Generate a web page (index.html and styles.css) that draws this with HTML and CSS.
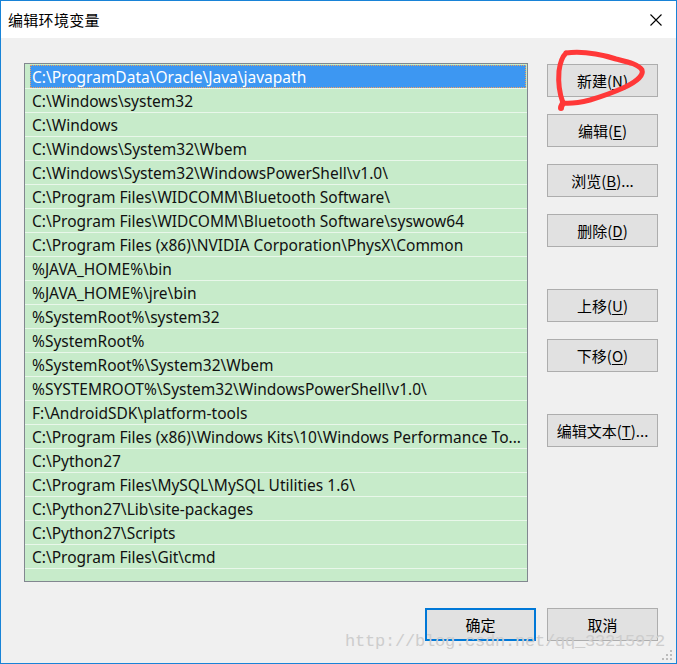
FILE: index.html
```html
<!DOCTYPE html>
<html>
<head>
<meta charset="utf-8">
<link rel="stylesheet" href="styles.css">
</head>
<body>
<div class="window">
  <div class="titlebar">
    <span class="title">编辑环境变量</span>
    <svg class="close" width="12" height="12" viewBox="0 0 12 12"><path d="M0.5 0.5 L11.5 11.5 M11.5 0.5 L0.5 11.5" stroke="#000" stroke-width="1.1" fill="none"/></svg>
  </div>
  <div class="content">
    <div class="main">
      <div class="list">
        <div class="row selected"><span>C:\ProgramData\Oracle\Java\javapath</span></div>
        <div class="row"><span>C:\Windows\system32</span></div>
        <div class="row"><span>C:\Windows</span></div>
        <div class="row"><span>C:\Windows\System32\Wbem</span></div>
        <div class="row"><span>C:\Windows\System32\WindowsPowerShell\v1.0\</span></div>
        <div class="row"><span>C:\Program Files\WIDCOMM\Bluetooth Software\</span></div>
        <div class="row"><span>C:\Program Files\WIDCOMM\Bluetooth Software\syswow64</span></div>
        <div class="row"><span>C:\Program Files (x86)\NVIDIA Corporation\PhysX\Common</span></div>
        <div class="row"><span>%JAVA_HOME%\bin</span></div>
        <div class="row"><span>%JAVA_HOME%\jre\bin</span></div>
        <div class="row"><span>%SystemRoot%\system32</span></div>
        <div class="row"><span>%SystemRoot%</span></div>
        <div class="row"><span>%SystemRoot%\System32\Wbem</span></div>
        <div class="row"><span>%SYSTEMROOT%\System32\WindowsPowerShell\v1.0\</span></div>
        <div class="row"><span>F:\AndroidSDK\platform-tools</span></div>
        <div class="row"><span>C:\Program Files (x86)\Windows Kits\10\Windows Performance To...</span></div>
        <div class="row"><span>C:\Python27</span></div>
        <div class="row"><span>C:\Program Files\MySQL\MySQL Utilities 1.6\</span></div>
        <div class="row"><span>C:\Python27\Lib\site-packages</span></div>
        <div class="row"><span>C:\Python27\Scripts</span></div>
        <div class="row"><span>C:\Program Files\Git\cmd</span></div>
      </div>
      <div class="side">
        <button class="btn">新建(<u>N</u>)</button>
        <button class="btn">编辑(<u>E</u>)</button>
        <button class="btn">浏览(<u>B</u>)...</button>
        <button class="btn">删除(<u>D</u>)</button>
        <button class="btn spaced">上移(<u>U</u>)</button>
        <button class="btn">下移(<u>O</u>)</button>
        <button class="btn spaced">编辑文本(<u>T</u>)...</button>
      </div>
    </div>
    <div class="footer">
      <button class="btn default">确定</button>
      <button class="btn">取消</button>
    </div>
  </div>
  <svg class="scribble" width="100" height="70" viewBox="0 0 100 70">
    <path d="M16 6 C 32 4, 50 7, 66 12 C 78 15, 88 17, 92 23 C 94 29, 84 36, 73 41 C 62 46, 50 50, 40 53 C 32 55, 22 57, 13 56 C 10 48, 8 36, 9 24 C 10 16, 13 9, 16 6" fill="none" stroke="#ff3838" stroke-width="5" stroke-linejoin="round" stroke-linecap="round"/>
    <path d="M13 56 C 12 58, 11 59, 11 61" fill="none" stroke="#ff3838" stroke-width="6" stroke-linecap="round"/>
  </svg>
  <div class="watermark">http://blog.csdn.net/qq_33215972</div>
  <svg class="grip" width="12" height="12" viewBox="0 0 12 12">
    <rect x="8" y="0" width="2" height="2" fill="#bcbcbc"/>
    <rect x="4" y="4" width="2" height="2" fill="#bcbcbc"/>
    <rect x="8" y="4" width="2" height="2" fill="#bcbcbc"/>
    <rect x="0" y="8" width="2" height="2" fill="#bcbcbc"/>
    <rect x="4" y="8" width="2" height="2" fill="#bcbcbc"/>
    <rect x="8" y="8" width="2" height="2" fill="#bcbcbc"/>
  </svg>
</div>
</body>
</html>
```
FILE: styles.css
```css
* { box-sizing: border-box; }
html, body { margin: 0; padding: 0; }
body {
  width: 677px;
  height: 664px;
  overflow: hidden;
  font-family: "Noto Sans", "Noto Sans CJK SC", sans-serif;
  font-size: 15px;
  color: #000;
}
.window {
  position: relative;
  width: 677px;
  height: 664px;
  border: 1px solid #1883d7;
  background: #f0f0f0;
  display: flex;
  flex-direction: column;
}
.titlebar {
  height: 37px;
  background: #fff;
  display: flex;
  align-items: center;
  justify-content: space-between;
  padding: 0 14px 1px 7px;
}
.title {
  font-family: "Noto Sans CJK SC", sans-serif;
  font-size: 15px;
  letter-spacing: 0.3px;
}
.close { display: block; margin-top: 1px; }
.content {
  padding: 25px 0 0 23px;
}
.main {
  display: flex;
  gap: 19px;
}
.list {
  width: 504px;
  height: 519px;
  border: 1px solid #828790;
  background: #c7ebca;
  padding-top: 1px;
}
.row {
  height: 24px;
  border-bottom: 1px solid #e9f7ea;
  display: flex;
  padding-left: 5px;
  padding-right: 1px;
}
.row span {
  flex: 1;
  line-height: 25px;
  height: 23px;
  padding-left: 2px;
  white-space: nowrap;
  overflow: hidden;
  font-size: 15.5px;
  color: #111;
}
.row.selected span {
  background: #3d97f2;
  color: #fff;
  outline: 1px dotted #f0a060;
  outline-offset: -1px;
}
.side {
  display: flex;
  flex-direction: column;
  gap: 17px;
  padding-top: 1px;
}
.btn {
  width: 111px;
  height: 33px;
  background: #e1e1e1;
  border: 1px solid #adadad;
  font-family: "Noto Sans CJK SC", sans-serif;
  font-size: 15px;
  color: #000;
  padding: 0;
  margin: 0;
}
.btn u { text-decoration: underline; text-underline-offset: 2px; }
.side .spaced { margin-top: 25px; }
.footer {
  display: flex;
  justify-content: flex-end;
  gap: 11px;
  padding: 26px 18px 0 0;
}
.btn.default {
  border: 2px solid #0078d7;
}
.scribble {
  position: absolute;
  left: 549px;
  top: 46px;
}
.watermark {
  position: absolute;
  left: 344px;
  top: 631px;
  font-family: "Liberation Mono", monospace;
  font-size: 17px;
  color: #cdcdcd;
  letter-spacing: -0.2px;
}
.grip {
  position: absolute;
  right: 2px;
  bottom: 1px;
}
```
